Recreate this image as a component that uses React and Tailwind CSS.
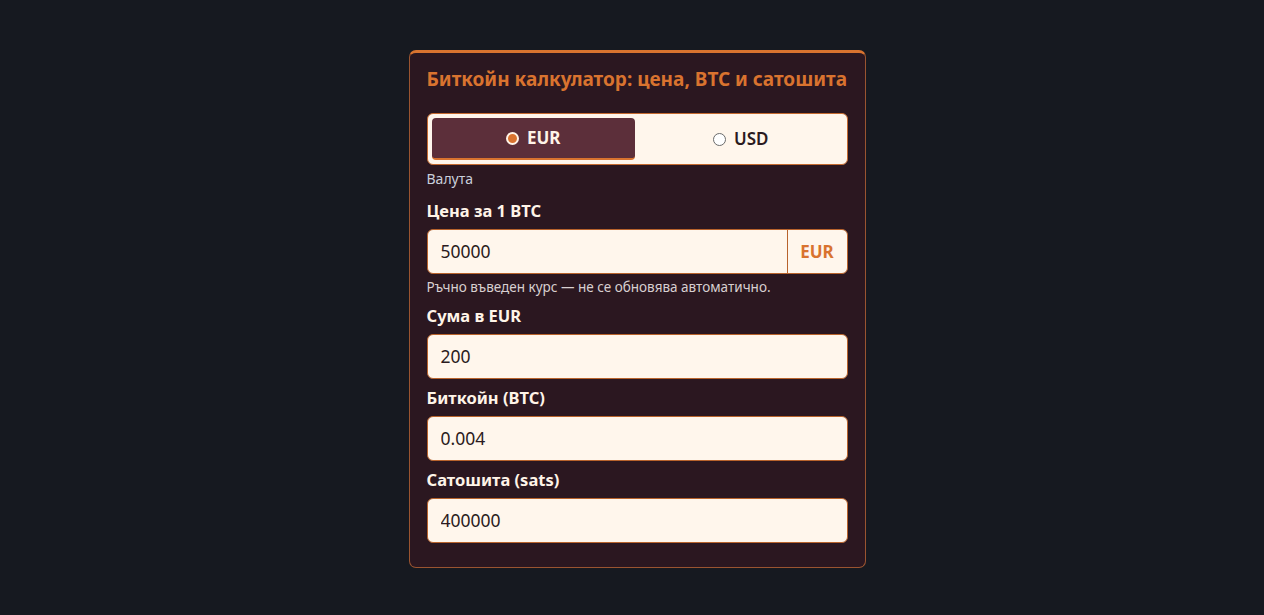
import { useState } from "react";

const FONT = { fontFamily: '"Noto Sans", "Open Sans", sans-serif' };

function Field({ label, value, onChange, suffix }) {
  return (
    <div className="flex flex-col">
      <label className="text-[16.5px] font-bold leading-5 text-[#fff4e8] mb-[8px]">{label}</label>
      <div className="flex h-[45px] rounded-[6px] border border-[#b8632c] bg-[#fff6ec] overflow-hidden">
        <input
          type="text"
          value={value}
          onChange={(e) => onChange(e.target.value)}
          className="flex-1 min-w-0 bg-transparent px-[13px] text-[17.5px] text-[#2b1a20] outline-none"
          style={FONT}
        />
        {suffix && (
          <span className="flex w-[60px] items-center justify-center border-l border-[#b8632c] text-[17px] font-bold text-[#d9732f]">
            {suffix}
          </span>
        )}
      </div>
    </div>
  );
}

export default function App() {
  const [currency, setCurrency] = useState("EUR");
  const [price, setPrice] = useState("50000");
  const [amount, setAmount] = useState("200");
  const [btc, setBtc] = useState("0.004");
  const [sats, setSats] = useState("400000");

  const options = ["EUR", "USD"];

  return (
    <div className="min-h-[615px] bg-[#161920] pt-[50px] pl-[10px] flex justify-center" style={FONT}>
      <div className="w-[457px] h-[518px] rounded-[7px] border border-[#9a5430] border-t-[3px] border-t-[#d9732f] bg-[#2b1720] px-[17px] pt-[14px]">
        <h1 className="text-[19px] font-bold leading-6 text-[#d9732f]">
          Биткойн калкулатор: цена, BTC и сатошита
        </h1>

        <div className="mt-[22px] flex h-[52px] gap-[4px] rounded-[6px] border border-[#c46a30] bg-[#fff6ec] p-[4px]">
          {options.map((opt) => {
            const active = currency === opt;
            return (
              <button
                key={opt}
                type="button"
                onClick={() => setCurrency(opt)}
                className={
                  active
                    ? "flex flex-1 items-center justify-center gap-[8px] rounded-[4px] border-b-[2px] border-[#d9732f] bg-[#5c2f3a] text-[17px] font-bold text-[#fff4e8]"
                    : "flex flex-1 items-center justify-center gap-[8px] rounded-[4px] text-[17px] font-semibold text-[#2b1a20]"
                }
              >
                {active ? (
                  <span className="h-[13px] w-[13px] rounded-full border-[2px] border-[#fff4e8] bg-[#d9732f]"></span>
                ) : (
                  <span className="h-[13px] w-[13px] rounded-full border border-[#6b6b6b] bg-white"></span>
                )}
                {opt}
              </button>
            );
          })}
        </div>
        <p className="mt-[6px] text-[14px] leading-4 text-[#c9cfdc]">Валута</p>

        <div className="mt-[14px] flex flex-col">
          <Field label="Цена за 1 BTC" value={price} onChange={setPrice} suffix={currency} />
          <p className="mt-[5px] text-[13.5px] leading-4 text-[#d8cfd0]">
            Ръчно въведен курс — не се обновява автоматично.
          </p>
        </div>

        <div className="mt-[11px] flex flex-col gap-[9px]">
          <Field label={`Сума в ${currency}`} value={amount} onChange={setAmount} />
          <Field label="Биткойн (BTC)" value={btc} onChange={setBtc} />
          <Field label="Сатошита (sats)" value={sats} onChange={setSats} />
        </div>
      </div>
    </div>
  );
}
